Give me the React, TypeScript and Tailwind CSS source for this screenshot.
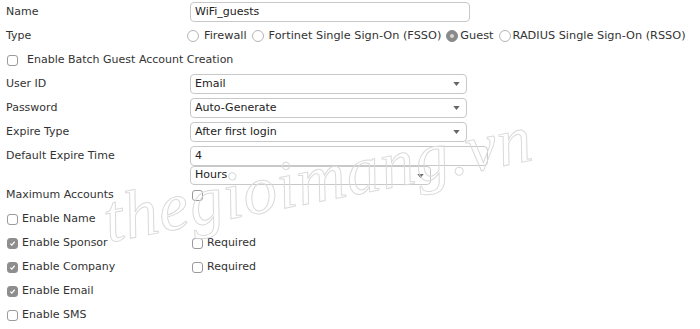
import React from "react";

const font = "font-['DejaVu_Sans',Verdana,sans-serif]";

function Checkbox({ checked = false }: { checked?: boolean }) {
  return (
    <span
      className={`shrink-0 inline-flex items-center justify-center w-[11px] h-[11px] rounded-[3px] border ${
        checked ? "bg-[#8e8e8e] border-[#8e8e8e]" : "bg-white border-[#9a9a9a]"
      }`}
    >
      {checked && (
        <svg width="7" height="7" viewBox="0 0 8 8">
          <path d="M1.5 4.2 L3.2 5.8 L6.5 2" stroke="#fff" strokeWidth="1.4" fill="none" />
        </svg>
      )}
    </span>
  );
}

function Radio({ checked = false }: { checked?: boolean }) {
  return (
    <span
      className={`shrink-0 inline-flex items-center justify-center w-[12px] h-[12px] rounded-full border ${
        checked ? "bg-[#8a8a8a] border-[#8a8a8a]" : "bg-white border-[#b5b5b5]"
      }`}
    >
      {checked && <span className="w-[4px] h-[4px] rounded-full bg-[#d8d8d8]" />}
    </span>
  );
}

function Select({ value, width, h = "h-[20px]" }: { value: string; width: string; h?: string }) {
  return (
    <div
      className={`${width} ${h} border border-[#c8c8c8] rounded-[4px] flex items-center justify-between pl-[4px] pr-[6px] text-[11px] text-[#222]`}
    >
      <span>{value}</span>
      <svg width="7" height="4" viewBox="0 0 8 5">
        <path d="M0 0 H8 L4 5 Z" fill="#666" />
      </svg>
    </div>
  );
}

function Row({ label, children, h = "h-[24px]" }: { label: string; children?: React.ReactNode; h?: string }) {
  return (
    <div className={`flex items-center ${h}`}>
      <div className="w-[190px] shrink-0 pl-[6px]">{label}</div>
      {children}
    </div>
  );
}

function CheckRow({ label, checked, required }: { label: string; checked?: boolean; required?: boolean }) {
  return (
    <div className="flex items-center h-[24px] whitespace-nowrap">
      <div className="w-[190px] shrink-0 pl-[7px] flex items-center gap-[4px]">
        <Checkbox checked={checked} />
        <span>{label}</span>
      </div>
      {required && (
        <div className="pl-[2px] flex items-center gap-[4px]">
          <Checkbox />
          <span>Required</span>
        </div>
      )}
    </div>
  );
}

export default function App() {
  return (
    <div className={`relative w-[700px] h-[329px] bg-white text-[#333] text-[11px] overflow-hidden ${font}`}>
      <Row label="Name">
        <div className="w-[280px] h-[20px] border border-[#c8c8c8] rounded-[4px] flex items-center pl-[4px] text-[#222]">
          WiFi_guests
        </div>
      </Row>

      <Row label="Type">
        <div className="-ml-[3px] flex items-center gap-[5px] whitespace-nowrap text-[11.3px]">
          <span className="flex items-center gap-[5px]">
            <Radio />
            Firewall
          </span>
          <span className="flex items-center gap-[5px]">
            <Radio />
            Fortinet Single Sign-On (FSSO)
          </span>
          <span className="flex items-center gap-[2px]">
            <Radio checked />
            Guest
          </span>
          <span className="flex items-center gap-[2px]">
            <Radio />
            RADIUS Single Sign-On (RSSO)
          </span>
        </div>
      </Row>

      <div className="flex items-center h-[24px] whitespace-nowrap pl-[7px] gap-[9px]">
        <Checkbox />
        <span>Enable Batch Guest Account Creation</span>
      </div>

      <Row label="User ID">
        <Select value="Email" width="w-[277px]" />
      </Row>
      <Row label="Password">
        <Select value="Auto-Generate" width="w-[277px]" />
      </Row>
      <Row label="Expire Type">
        <Select value="After first login" width="w-[277px]" />
      </Row>

      <div className="flex h-[42px] pt-[2px]">
        <div className="w-[190px] shrink-0 pl-[6px] h-[20px] flex items-center">Default Expire Time</div>
        <div className="flex flex-col">
          <div className="w-[298px] h-[20px] border border-[#c8c8c8] rounded-[4px] flex items-center pl-[4px] text-[#222]">
            4
          </div>
          <Select value="Hours" width="w-[241px]" h="h-[19px]" />
        </div>
      </div>

      <Row label="Maximum Accounts" h="h-[19px]">
        <div className="pl-[2px] flex items-center">
          <Checkbox />
        </div>
      </Row>

      <div className="h-[2px]" />

      <CheckRow label="Enable Name" />
      <CheckRow label="Enable Sponsor" checked required />
      <CheckRow label="Enable Company" checked required />
      <CheckRow label="Enable Email" checked />
      <CheckRow label="Enable SMS" />

      {/* watermark */}
      <div className="pointer-events-none absolute left-[104px] top-[186px] origin-left -rotate-[11deg] font-['Liberation_Serif',serif] italic text-[68px] leading-none text-transparent [-webkit-text-stroke:1px_#dadada] tracking-[1px] whitespace-nowrap">
        thegioimang.vn
      </div>
    </div>
  );
}
